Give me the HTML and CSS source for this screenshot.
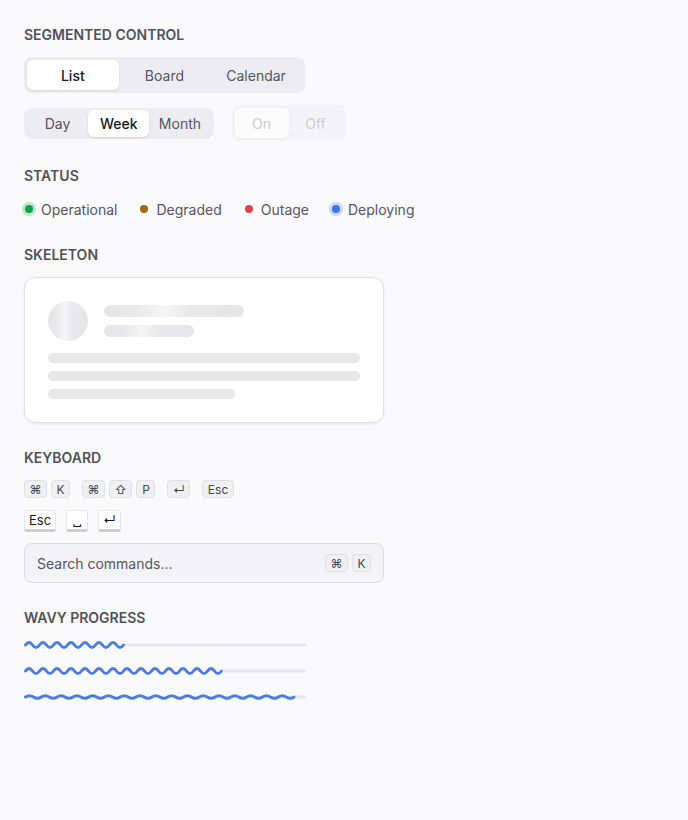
FILE: index.html
```html
<!DOCTYPE html>
<html lang="en">
<head>
    <meta charset="UTF-8">
    <meta name="viewport" content="width=device-width, initial-scale=1.0">
    <title>Components</title>
    <link rel="stylesheet" href="styles.css">
</head>
<body>
    <div class="page">
        <!-- segmented control -->
        <section class="section">
            <h2 class="section-title">Segmented control</h2>
            <div class="seg-stack">
                <div class="seg">
                    <button class="seg-item active">List</button>
                    <button class="seg-item">Board</button>
                    <button class="seg-item">Calendar</button>
                </div>
                <div class="seg-row">
                    <div class="seg seg-sm">
                        <button class="seg-item">Day</button>
                        <button class="seg-item active">Week</button>
                        <button class="seg-item">Month</button>
                    </div>
                    <div class="seg disabled">
                        <button class="seg-item active" disabled>On</button>
                        <button class="seg-item" disabled>Off</button>
                    </div>
                </div>
            </div>
        </section>

        <!-- status -->
        <section class="section">
            <h2 class="section-title">Status</h2>
            <div class="status-list">
                <span class="status"><span class="dot dot-green"></span>Operational</span>
                <span class="status"><span class="dot dot-amber"></span>Degraded</span>
                <span class="status"><span class="dot dot-red"></span>Outage</span>
                <span class="status"><span class="dot dot-blue"></span>Deploying</span>
            </div>
        </section>

        <!-- skeleton -->
        <section class="section">
            <h2 class="section-title">Skeleton</h2>
            <div class="skeleton-card">
                <div class="skeleton-head">
                    <div class="sk sk-avatar shimmer"></div>
                    <div class="skeleton-head-lines">
                        <div class="sk sk-title shimmer"></div>
                        <div class="sk sk-sub shimmer"></div>
                    </div>
                </div>
                <div class="skeleton-body">
                    <div class="sk sk-line"></div>
                    <div class="sk sk-line"></div>
                    <div class="sk sk-line short"></div>
                </div>
            </div>
        </section>

        <!-- keyboard -->
        <section class="section">
            <h2 class="section-title">Keyboard</h2>
            <div class="kbd-row">
                <span class="kbd-group"><kbd>⌘</kbd><kbd>K</kbd></span>
                <span class="kbd-group"><kbd>⌘</kbd><kbd>⇧</kbd><kbd>P</kbd></span>
                <span class="kbd-group"><kbd>↵</kbd></span>
                <span class="kbd-group"><kbd>Esc</kbd></span>
            </div>
            <div class="key-row">
                <span class="key">Esc</span>
                <span class="key">␣</span>
                <span class="key">↵</span>
            </div>
            <div class="search-box">
                <span class="search-placeholder">Search commands...</span>
                <span class="kbd-group"><kbd>⌘</kbd><kbd>K</kbd></span>
            </div>
        </section>

        <!-- wavy progress -->
        <section class="section">
            <h2 class="section-title">Wavy progress</h2>
            <div class="wave-list">
                <svg class="wave" width="282" height="10" viewBox="0 0 282 10">
                    <line class="wave-track" x1="102" y1="5" x2="280.5" y2="5"/>
                    <path class="wave-fill" d="M1.5 5 q3.5 -5 7 0 t7 0 t7 0 t7 0 t7 0 t7 0 t7 0 t7 0 t7 0 t7 0 t7 0 t7 0 t7 0 t7 0"/>
                </svg>
                <svg class="wave" width="282" height="10" viewBox="0 0 282 10">
                    <line class="wave-track" x1="201" y1="5" x2="280.5" y2="5"/>
                    <path class="wave-fill" d="M1.5 5 q3.5 -5 7 0 t7 0 t7 0 t7 0 t7 0 t7 0 t7 0 t7 0 t7 0 t7 0 t7 0 t7 0 t7 0 t7 0 t7 0 t7 0 t7 0 t7 0 t7 0 t7 0 t7 0 t7 0 t7 0 t7 0 t7 0 t7 0 t7 0 t7 0"/>
                </svg>
                <svg class="wave" width="282" height="10" viewBox="0 0 282 10">
                    <line class="wave-track" x1="273.5" y1="5" x2="280.5" y2="5"/>
                    <path class="wave-fill" d="M1.5 5 q3.95 -2.6 7.9 0 t7.9 0 t7.9 0 t7.9 0 t7.9 0 t7.9 0 t7.9 0 t7.9 0 t7.9 0 t7.9 0 t7.9 0 t7.9 0 t7.9 0 t7.9 0 t7.9 0 t7.9 0 t7.9 0 t7.9 0 t7.9 0 t7.9 0 t7.9 0 t7.9 0 t7.9 0 t7.9 0 t7.9 0 t7.9 0 t7.9 0 t7.9 0 t7.9 0 t7.9 0 t7.9 0 t7.9 0 t7.9 0 t7.9 0"/>
                </svg>
            </div>
        </section>
    </div>
</body>
</html>
```

FILE: styles.css
```css
body {
    margin: 0;
    background-color: #fafafc;
    font-family: 'Inter', 'Noto Sans', sans-serif;
    color: #4d4d57;
}

.page {
    padding: 24px;
    display: flex;
    flex-direction: column;
    gap: 24px;
}

.section-title {
    margin: 0 0 11px;
    font-size: 14px;
    line-height: 22px;
    font-weight: 600;
    text-transform: uppercase;
    color: #51515b;
}

/* segmented control */
.seg-stack {
    display: flex;
    flex-direction: column;
    align-items: flex-start;
    gap: 12px;
}

.seg-row {
    display: flex;
    align-items: center;
    gap: 18px;
}

.seg {
    display: inline-grid;
    grid-auto-flow: column;
    grid-auto-columns: 1fr;
    padding: 3px;
    background-color: #ededf1;
    border-radius: 8px;
}

.seg-item {
    height: 30px;
    padding: 0 16px;
    border: none;
    border-radius: 6px;
    background: transparent;
    font-family: inherit;
    font-size: 14px;
    color: #55555e;
    cursor: pointer;
}

.seg-item.active {
    background-color: white;
    color: #18181b;
    font-weight: 500;
    box-shadow: 0 1px 2px rgba(0,0,0,0.12);
}

.seg-sm {
    padding: 2px 3px;
}

.seg-sm .seg-item {
    height: 27px;
    padding: 0 9.5px;
}

.seg.disabled {
    opacity: 0.4;
}

.seg.disabled .seg-item {
    width: 54px;
    padding: 0;
    color: #8a8a93;
    font-weight: 400;
    cursor: default;
}

/* status */
.status-list {
    display: flex;
    align-items: center;
    gap: 23px;
    height: 22px;
    padding-left: 1px;
}

.status {
    display: inline-flex;
    align-items: center;
    gap: 8px;
    font-size: 14px;
    color: #55555e;
}

.dot {
    width: 8px;
    height: 8px;
    border-radius: 50%;
}

.dot-green {
    background-color: #13a049;
    box-shadow: 0 0 0 3px rgba(19,160,73,0.25);
}

.dot-amber {
    background-color: #a26a08;
}

.dot-red {
    background-color: #d54545;
}

.dot-blue {
    background-color: #3f73e0;
    box-shadow: 0 0 0 3px rgba(63,115,224,0.25);
}

/* skeleton */
.skeleton-card {
    width: 360px;
    height: 146px;
    box-sizing: border-box;
    padding: 23px;
    background: white;
    border: 1px solid #e2e2e8;
    border-radius: 12px;
    box-shadow: 0 1px 3px rgba(0,0,0,0.08);
}

.skeleton-head {
    display: flex;
    align-items: center;
    gap: 16px;
    margin-bottom: 12px;
}

.skeleton-head-lines {
    display: flex;
    flex-direction: column;
    gap: 8px;
}

.sk {
    background-color: #e8e8ea;
    border-radius: 999px;
}

.shimmer {
    background: linear-gradient(90deg, #e6e6e8 0%, #e8e8ea 20%, #f6f6f7 42%, #e8e8ea 62%, #e6e6e8 100%);
}

.sk-avatar {
    width: 40px;
    height: 40px;
    border-radius: 50%;
}

.sk-title {
    width: 140px;
    height: 12px;
}

.sk-sub {
    width: 90px;
    height: 12px;
}

.skeleton-body {
    display: flex;
    flex-direction: column;
    gap: 8px;
}

.sk-line {
    height: 10px;
}

.sk-line.short {
    width: 60%;
}

/* keyboard */
.kbd-row {
    display: flex;
    gap: 12px;
}

.kbd-group {
    display: inline-flex;
    gap: 4px;
}

kbd {
    display: inline-flex;
    align-items: center;
    justify-content: center;
    min-width: 19px;
    height: 18px;
    padding: 0 4.5px;
    box-sizing: border-box;
    background-color: #f0f0f3;
    border: 1px solid #dfdfe4;
    border-radius: 4px;
    font-family: 'Inter', 'DejaVu Sans', sans-serif;
    font-size: 12px;
    color: #46464f;
}

.key-row {
    display: flex;
    gap: 10px;
    margin-top: 12px;
}

.key {
    display: inline-flex;
    align-items: center;
    justify-content: center;
    min-width: 22px;
    height: 22px;
    padding: 0 4px;
    box-sizing: border-box;
    background: white;
    border: 1px solid #e6e6ea;
    border-bottom: 3px solid #cdcdd2;
    border-radius: 2px;
    font-family: 'Inter', 'DejaVu Sans', sans-serif;
    font-size: 13px;
    color: #18181b;
}

.search-box {
    display: flex;
    align-items: center;
    justify-content: space-between;
    width: 360px;
    height: 40px;
    margin-top: 11px;
    padding: 0 12px;
    box-sizing: border-box;
    background-color: #f4f4f6;
    border: 1px solid #dcdce2;
    border-radius: 8px;
}

.search-placeholder {
    font-size: 14px;
    color: #55555e;
}

/* wavy progress */
.wave-list {
    display: flex;
    flex-direction: column;
    gap: 16px;
}

.wave {
    display: block;
    overflow: visible;
}

.wave-track {
    stroke: #e6e6ea;
    stroke-width: 3;
    stroke-linecap: round;
}

.wave-fill {
    fill: none;
    stroke: #4a7de2;
    stroke-width: 3;
    stroke-linecap: round;
}
```
